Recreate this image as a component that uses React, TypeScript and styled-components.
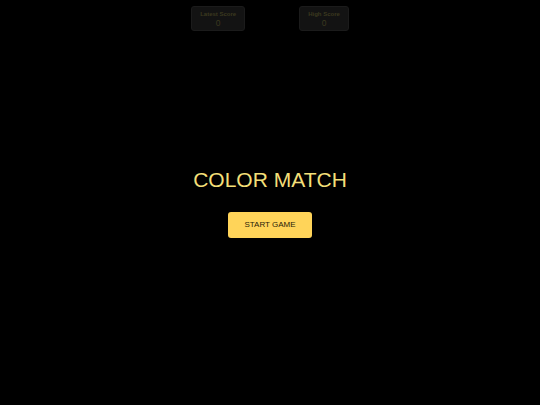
import styled, { createGlobalStyle } from "styled-components";

const GlobalStyle = createGlobalStyle`
  html, body {
    margin: 0;
    padding: 0;
    background: #000;
  }
  body {
    font-family: "Liberation Sans", Arial, sans-serif;
  }
`;

/**
 * 점수 박스 컴포넌트
 */
interface ScoreBoxProps {
  label: string;
  value: number;
}

const ScoreBox = ({ label, value }: ScoreBoxProps) => (
  <StyledScoreBox>
    <div className="label">{label}</div>
    <div className="value">{value}</div>
  </StyledScoreBox>
);

const App = () => {
  return (
    <StyledWrapper>
      <GlobalStyle />
      {/* 상단 점수 */}
      <ScoreBar>
        <ScoreBox label="Latest Score" value={0} />
        <ScoreBox label="High Score" value={0} />
      </ScoreBar>

      {/* 시작 화면 */}
      <StartPanel>
        <Title>COLOR MATCH</Title>
        <StartButton>START GAME</StartButton>
      </StartPanel>
    </StyledWrapper>
  );
};

export default App;

const StyledWrapper = styled.div`
  display: grid;
  grid-template-rows: 1fr auto 1fr;
  width: 540px;
  height: 405px;
  background: #000;
`;

const ScoreBar = styled.div`
  align-self: start;
  display: flex;
  justify-content: center;
  gap: 54px;
  padding-top: 6px;
`;

const StyledScoreBox = styled.div`
  display: flex;
  flex-direction: column;
  align-items: center;
  padding: 3px 8px 2px;
  background: #131313;
  border: 1px solid #1b1b1b;
  border-radius: 3px;
  color: #3b391f;
  & > .label {
    font-size: 6px;
    font-weight: bold;
    line-height: 8px;
  }
  & > .value {
    font-size: 8.5px;
    line-height: 10px;
  }
`;

const StartPanel = styled.div`
  display: flex;
  flex-direction: column;
  align-items: center;
  gap: 20px;
`;

const Title = styled.h1`
  margin: 0;
  font-size: 21px;
  font-weight: normal;
  color: #f3df78;
  line-height: 24px;
`;

const StartButton = styled.button`
  width: 84px;
  height: 26px;
  border: none;
  border-radius: 3px;
  background: #ffd459;
  color: #2a2208;
  font-family: "Liberation Sans", Arial, sans-serif;
  font-size: 8px;
  cursor: pointer;
`;
